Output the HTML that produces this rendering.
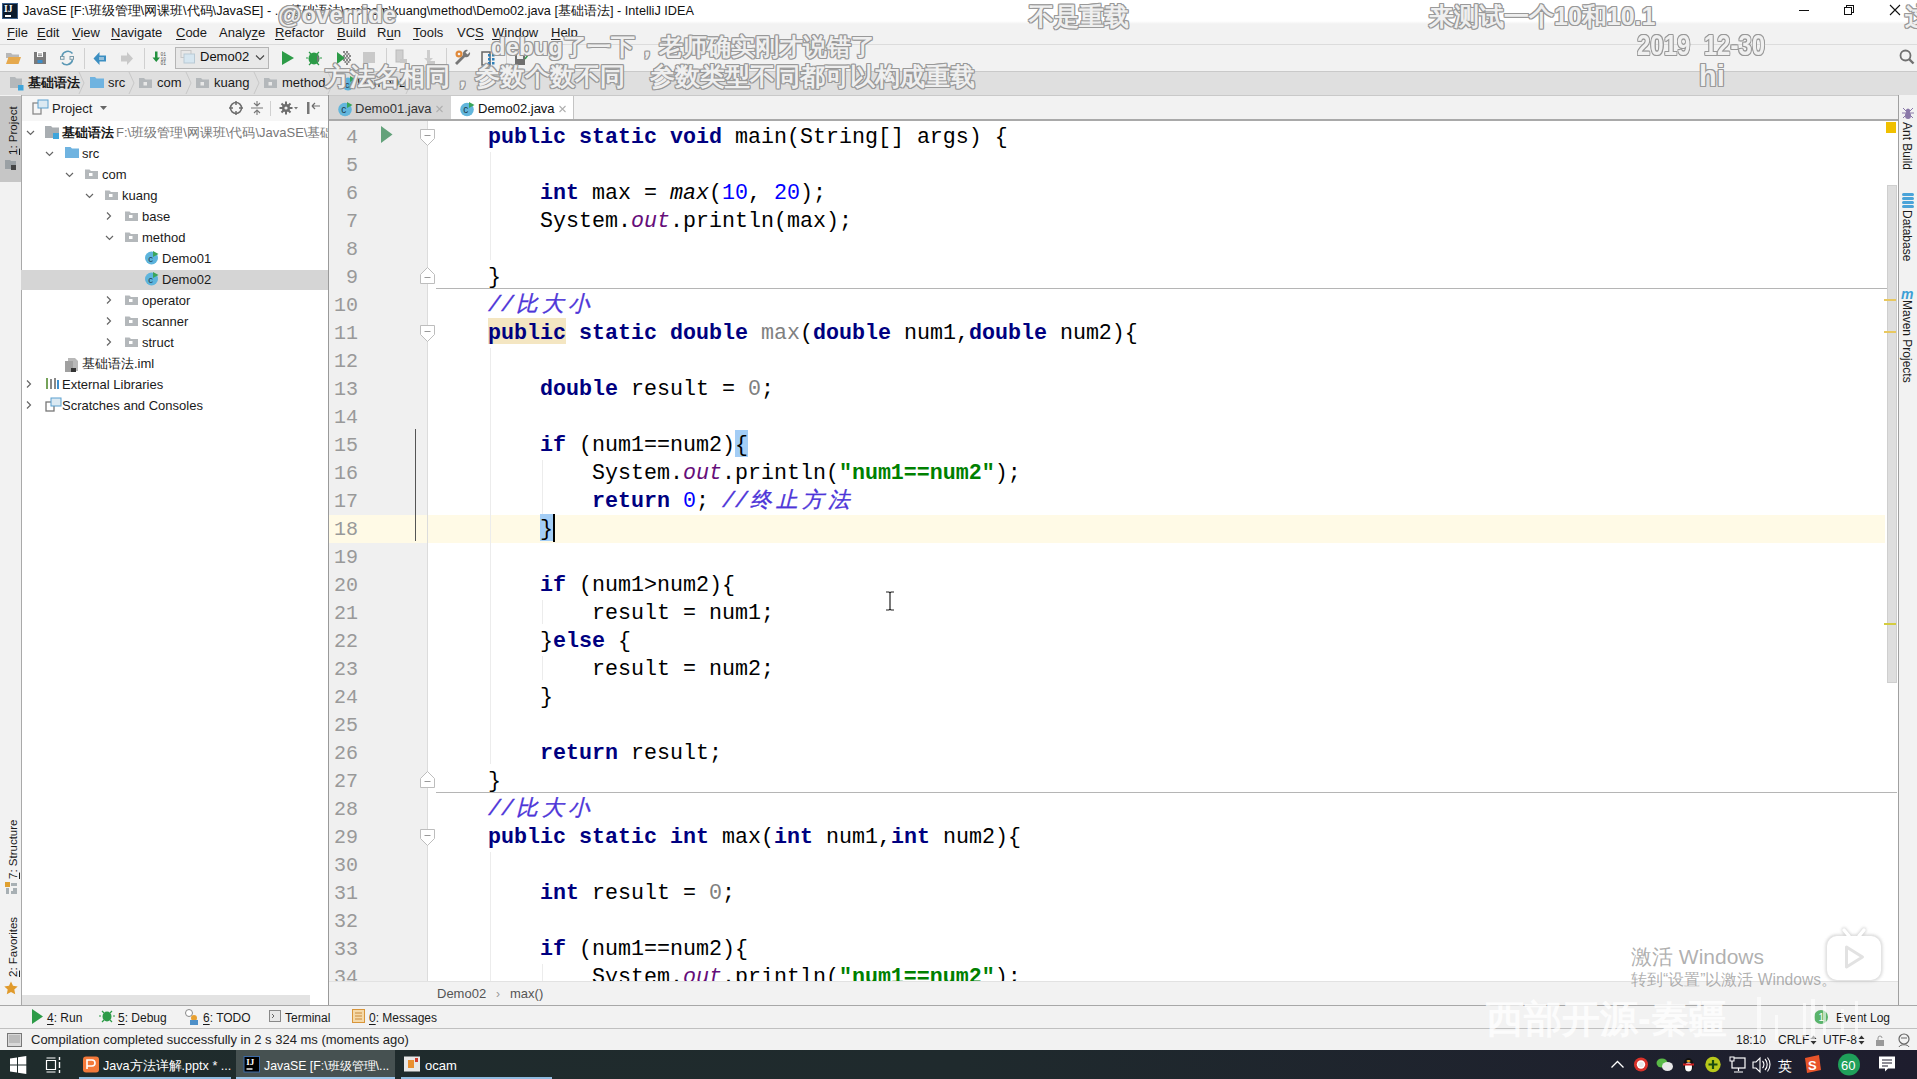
<!DOCTYPE html>
<html><head><meta charset="utf-8">
<style>
*{margin:0;padding:0;box-sizing:border-box}
html,body{width:1917px;height:1079px;overflow:hidden;background:#f2f2f2;font-family:"Liberation Sans",sans-serif;font-size:13px;color:#1a1a1a;position:relative}
.a{position:absolute}
.t{position:absolute;white-space:nowrap;line-height:16px}
u{text-decoration:underline;text-underline-offset:2px}
#title{left:0;top:0;width:1917px;height:24px;background:linear-gradient(#fff 0,#fff 21px,#f2f2f2 24px)}
#menu{left:0;top:24px;width:1917px;height:20px;background:#f2f2f2}
#tool{left:0;top:44px;width:1917px;height:27px;background:#f2f2f2;border-top:1px solid #dcdcdc}
#nav{left:0;top:71px;width:1917px;height:24px;background:#dfdfdf;border-top:1px solid #c9c9c9}
#lstripe{left:0;top:95px;width:22px;height:910px;background:#f2f2f2;border-right:1px solid #a9a9a9}
#proj{left:22px;top:95px;width:307px;height:910px;background:#fff}
#projhdr{left:22px;top:95px;width:306px;height:26px;background:#f6f6f6;border-top:1px solid #c9c9c9}
#vdiv{left:328px;top:95px;width:1px;height:910px;background:#9a9a9a}
#tabs{left:329px;top:95px;width:1569px;height:26px;background:#f2f2f2;border-top:1px solid #c9c9c9}
#gutter{left:329px;top:121px;width:99px;height:860px;background:#f0f0f0;border-right:1px solid #e4e4e4}
#code{left:428px;top:121px;width:1470px;height:860px;background:#fff}
#crumb{z-index:5;left:329px;top:981px;width:1569px;height:24px;background:#f2f2f2;border-top:1px solid #e2e2e2}
#rstripe{left:1898px;top:95px;width:19px;height:910px;background:#f2f2f2;border-left:1px solid #a0a0a0}
#btool{z-index:5;left:0;top:1005px;width:1917px;height:23px;background:#f2f2f2;border-top:1px solid #a8a8a8}
#status{z-index:5;left:0;top:1028px;width:1917px;height:22px;background:#f2f2f2;border-top:1px solid #c0c0c0}
#taskbar{left:0;top:1050px;width:1917px;height:29px;background:#1d2730}
.ln{position:absolute;left:329px;width:29px;text-align:right;color:#999;font-family:"Liberation Mono",monospace;font-size:20px;line-height:28px}
.cl{position:absolute;left:436px;white-space:pre;color:#000;font-family:"Liberation Mono",monospace;font-size:21.67px;line-height:28px}
.k{color:#000080;font-weight:bold}
.n{color:#0000ff}
.s{color:#008000;font-weight:bold}
.f{color:#660e7a;font-style:italic}
.c{color:#4d35d8;font-style:italic;-webkit-text-stroke:.35px #4d35d8}
.g{color:#808080}
.i{font-style:italic}
.w{display:inline-block;width:26px;text-align:center}
.hl{}
.bm{}
.tr{position:absolute;white-space:nowrap;font-size:13px;line-height:21px;color:#1a1a1a}
.sep{position:absolute;width:1px;background:#cfcfcf}
.dm{position:absolute;white-space:nowrap;font-weight:bold;font-size:24px;line-height:26px;color:rgba(255,255,255,.85);
 text-shadow:1px 1px 0 #999,-1px -1px 0 #999,1px -1px 0 #999,-1px 1px 0 #999,0 1px 0 #999,0 -1px 0 #999,1px 0 0 #999,-1px 0 0 #999}
.vt{position:absolute;white-space:nowrap;font-size:12px;line-height:14px;transform-origin:0 0}
</style></head><body>
<div id="title" class="a"></div>
<div id="menu" class="a"></div>
<div id="tool" class="a"></div>
<div id="nav" class="a"></div>
<div id="lstripe" class="a"></div>
<div id="proj" class="a"></div>
<div id="projhdr" class="a"></div>
<div id="tabs" class="a"></div>
<div id="gutter" class="a"></div>
<div id="code" class="a"></div>
<div id="vdiv" class="a"></div>
<div id="crumb" class="a"></div>
<div id="rstripe" class="a"></div>
<div id="btool" class="a"></div>
<div id="status" class="a"></div>
<div id="taskbar" class="a"></div>
<div class="a" style="left:2px;top:3px;width:16px;height:16px;background:#0b1a2b;border:1px solid #3b5f8a"></div>
<div class="t" style="left:4px;top:4px;font-size:9.5px;line-height:10px;color:#fff;font-weight:bold;font-family:'Liberation Serif'">IJ</div>
<div class="a" style="left:5px;top:15px;width:6px;height:1.5px;background:#fff"></div>
<div class="t" style="left:23px;top:3px;font-size:12.7px;color:#111">JavaSE [F:\班级管理\网课班\代码\JavaSE] - ...\基础语法\src\com\kuang\method\Demo02.java [基础语法] - IntelliJ IDEA</div>
<div class="a" style="left:1799px;top:10px;width:10px;height:1px;background:#111"></div>
<div class="a" style="left:1846px;top:5px;width:8px;height:8px;border:1px solid #111;background:#fff"></div>
<div class="a" style="left:1844px;top:7px;width:8px;height:8px;border:1px solid #111;background:#fff"></div>
<svg class="a" style="left:1889px;top:4px" width="12" height="12"><path d="M1 1L11 11M11 1L1 11" stroke="#111" stroke-width="1.1"/></svg>

<div class="t" style="left:7px;top:25px"><u>F</u>ile</div>
<div class="t" style="left:37px;top:25px"><u>E</u>dit</div>
<div class="t" style="left:72px;top:25px"><u>V</u>iew</div>
<div class="t" style="left:111px;top:25px"><u>N</u>avigate</div>
<div class="t" style="left:176px;top:25px"><u>C</u>ode</div>
<div class="t" style="left:219px;top:25px">Analy<u>z</u>e</div>
<div class="t" style="left:275px;top:25px"><u>R</u>efactor</div>
<div class="t" style="left:337px;top:25px"><u>B</u>uild</div>
<div class="t" style="left:377px;top:25px">R<u>u</u>n</div>
<div class="t" style="left:413px;top:25px"><u>T</u>ools</div>
<div class="t" style="left:457px;top:25px">VC<u>S</u></div>
<div class="t" style="left:492px;top:25px"><u>W</u>indow</div>
<div class="t" style="left:551px;top:25px"><u>H</u>elp</div>

<svg class="a" style="left:0;top:44px" width="560" height="27">
 <!-- open folder -->
 <path d="M6 9h5l1.5 1.5H19V14H6z" fill="#b8b8b8"/>
 <path d="M6 20l2.5-7H21l-2.5 7z" fill="#e6a94d"/>
 <!-- save -->
 <rect x="34" y="8" width="12" height="12" fill="#7a7a7a"/>
 <rect x="37" y="8" width="6" height="5" fill="#fff"/>
 <rect x="38" y="9.5" width="4" height="1" fill="#7a7a7a"/><rect x="38" y="11.2" width="4" height="1" fill="#7a7a7a"/>
 <rect x="37.5" y="16" width="5" height="3" fill="#3d8ec9"/>
 <!-- sync -->
 <path d="M62 12a6 6 0 0 1 10.5-2.5M72.5 16a6 6 0 0 1-10.5 2.5" stroke="#5a98b5" stroke-width="1.6" fill="none"/>
 <rect x="60.5" y="12.5" width="3.5" height="2.8" fill="none" stroke="#7a9aa8" stroke-width="1"/>
 <rect x="70" y="12.5" width="3.5" height="2.8" fill="none" stroke="#7a9aa8" stroke-width="1"/>
 <rect x="84" y="4" width="1" height="21" fill="#d0d0d0"/>
 <!-- back -->
 <path d="M93.5 14.5l6-6.5v3.5h6.5v6h-6.5v3.5z" fill="#3c8fc2"/>
 <path d="M99 13h5v3h-5z" fill="#f2f2f2" opacity=".5"/>
 <!-- fwd -->
 <path d="M133 14.5l-6-6.5v3.5h-6v6h6v3.5z" fill="#c9c9c9"/>
 <rect x="144" y="4" width="1" height="21" fill="#d0d0d0"/>
 <!-- 01 -->
 <path d="M155 7.5h2.5v6h2.5l-3.75 4.5-3.75-4.5h2.5z" fill="#22913f"/>
 <text x="160.5" y="12" font-size="4.6" font-family="Liberation Mono" fill="#555">01</text>
 <text x="160.5" y="16.5" font-size="4.6" font-family="Liberation Mono" fill="#555">10</text>
 <text x="160.5" y="21" font-size="4.6" font-family="Liberation Mono" fill="#555">01</text>
 <!-- combobox -->
 <rect x="175.5" y="3.5" width="93" height="21" fill="#e8e8e8" stroke="#b5b5b5"/>
 <rect x="181" y="6.5" width="10" height="7" fill="none" stroke="#c7c7c7" stroke-width="1"/>
 <rect x="184" y="10" width="10.5" height="9" fill="#d6e6f0" stroke="#b9c9d4" stroke-width="1"/>
 <path d="M256 11.5l4 4 4-4" stroke="#444" stroke-width="1.1" fill="none"/>
 <!-- run -->
 <path d="M282 7l12 7-12 7z" fill="#2c9b47"/>
 <!-- debug -->
 <ellipse cx="314" cy="14.5" rx="5.5" ry="6" fill="#2c9b47"/>
 <path d="M309 8l2 2M319 8l-2 2M308 14h-2M320 14h2M309 21l2-2M319 21l-2-2" stroke="#2c9b47" stroke-width="1.2"/>
 <path d="M317 11a4 4 0 0 1 0 7z" fill="#777"/>
 <!-- coverage -->
 <path d="M337 8l8 6-8 6z" fill="#2c9b47"/>
 <g fill="#888"><rect x="343" y="7" width="2" height="2"/><rect x="346" y="7" width="2" height="2"/><rect x="344.5" y="9" width="2" height="2"/><rect x="347.5" y="9" width="2" height="2"/><rect x="343" y="11" width="2" height="2"/><rect x="346" y="11" width="2" height="2"/><rect x="349" y="11" width="2" height="2"/><rect x="344.5" y="13" width="2" height="2"/><rect x="347.5" y="13" width="2" height="2"/><rect x="343" y="15" width="2" height="2"/><rect x="346" y="15" width="2" height="2"/><rect x="349" y="15" width="2" height="2"/><rect x="344.5" y="17" width="2" height="2"/><rect x="347.5" y="17" width="2" height="2"/><rect x="346" y="19" width="2" height="2"/></g>
 <!-- stop -->
 <rect x="363" y="8" width="12" height="11" fill="#c9c9c9"/>
 <rect x="386" y="4" width="1" height="21" fill="#d0d0d0"/>
 <rect x="396" y="6" width="7" height="12" fill="#cfcfcf" stroke="#bbb" stroke-width="1"/>
 <rect x="400" y="15" width="7" height="4" fill="#c8c8c8"/>
 <path d="M427 6h3v8h3l-4.5 4.5-4.5-4.5h3z" fill="#cdcdcd"/>
 <rect x="427" y="17" width="8" height="4" fill="#c8c8c8"/>
 <rect x="446" y="4" width="1" height="21" fill="#d0d0d0"/>
 <!-- wrench -->
 <path d="M457 21l8-8a4 4 0 0 0 5-5l-2.5 2.5-2-2 2.5-2.5a4 4 0 0 0-5 5l-8 8z" fill="#777"/>
 <circle cx="459" cy="10" r="3.5" fill="#e0893a"/><circle cx="459" cy="10" r="1.3" fill="#f2f2f2"/>
 <!-- project structure -->
 <rect x="482" y="8" width="8" height="13" fill="none" stroke="#666" stroke-width="1.5"/>
 <g fill="#2e7fb8"><rect x="488" y="10" width="2.5" height="2.5"/><rect x="492" y="10" width="2.5" height="2.5"/><rect x="488" y="14" width="2.5" height="2.5"/><rect x="492" y="14" width="2.5" height="2.5"/><rect x="488" y="18" width="2.5" height="2.5"/><rect x="492" y="18" width="2.5" height="2.5"/></g>
 <rect x="506" y="4" width="1" height="21" fill="#d0d0d0"/>
 <rect x="515" y="11" width="10" height="10" fill="#6f6f6f"/><rect x="517" y="11" width="6" height="4" fill="#eee"/>
 <path d="M525 7l3 4-3 4" stroke="#3a9a50" stroke-width="1.5" fill="none"/>
</svg>
<svg class="a" style="left:1898px;top:48px" width="18" height="18"><circle cx="7.5" cy="7.5" r="5" fill="none" stroke="#707070" stroke-width="1.8"/><path d="M11 11l4.5 4.5" stroke="#707070" stroke-width="2.4"/></svg>
<div class="t" style="left:200px;top:49px;font-size:13px;color:#111">Demo02</div>

<svg class="a" style="left:0;top:71px" width="460" height="24">
 <defs>
  <g id="gf"><path d="M0 2h5l1.5 1.5H13V12H0z" fill="#b4b8bb"/><rect x="4.5" y="6" width="3.5" height="3.5" fill="#e8e8e8"/></g>
 </defs>
 <path d="M10 6h5l1.5 1.5H22V17H10z" fill="#b4b8bb"/><rect x="18" y="14" width="5.5" height="5.5" fill="#3fa5db"/>
 <path d="M79 1l5 11-5 11" stroke="#c8c8c8" fill="none" stroke-width="1"/>
 <path d="M90 6h5l1.5 1.5H104V17H90z" fill="#6fb3e0"/>
 <path d="M129 1l5 11-5 11" stroke="#c8c8c8" fill="none"/>
 <use href="#gf" x="139" y="5"/>
 <path d="M186 1l5 11-5 11" stroke="#c8c8c8" fill="none"/>
 <use href="#gf" x="196" y="5"/>
 <path d="M254 1l5 11-5 11" stroke="#c8c8c8" fill="none"/>
 <use href="#gf" x="264" y="5"/>
 <path d="M328 1l5 11-5 11" stroke="#c8c8c8" fill="none"/>
 <circle cx="348" cy="13" r="6.5" fill="#5eb3d9"/><text x="345" y="16.5" font-size="9" font-family="Liberation Sans" fill="#234">c</text><path d="M350 5l5 3-5 3z" fill="#3aa55a"/>
 <path d="M406 1l5 11-5 11" stroke="#c8c8c8" fill="none"/>
</svg>
<div class="t" style="left:28px;top:75px;font-weight:bold;font-size:13px">基础语法</div>
<div class="t" style="left:108px;top:75px">src</div>
<div class="t" style="left:157px;top:75px">com</div>
<div class="t" style="left:214px;top:75px">kuang</div>
<div class="t" style="left:282px;top:75px">method</div>
<div class="t" style="left:357px;top:75px">Demo02</div>

<div class="a" style="left:0;top:96px;width:21px;height:86px;background:#c6c6c6"></div>
<div class="vt" style="font-size:11.5px;left:6px;top:155px;transform:rotate(-90deg)"><u>1</u>: Project</div>
<svg class="a" style="left:4px;top:158px" width="14" height="14"><path d="M1 2h5l1 1h5v8H1z" fill="#9aa0a4"/><rect x="7" y="7" width="5" height="5" fill="#444"/></svg>
<div class="vt" style="font-size:11.5px;left:6px;top:879px;transform:rotate(-90deg)"><u>7</u>: Structure</div>
<svg class="a" style="left:5px;top:882px" width="13" height="13"><rect x="0" y="0" width="5" height="5" fill="#e0a030"/><path d="M1 6h3v6H1zM6 1h6v3H6zM8 6h4v6H6v-3h2z" fill="#a8b0b4"/></svg>
<div class="vt" style="font-size:11.5px;left:6px;top:977px;transform:rotate(-90deg)"><u>2</u>: Favorites</div>
<svg class="a" style="left:4px;top:981px" width="14" height="14"><path d="M7 0.5l2 4.3 4.7.6-3.4 3.2.9 4.7L7 11l-4.2 2.3.9-4.7L.3 5.4 5 4.8z" fill="#e09a2b"/></svg>

<svg class="a" style="left:21px;top:95px" width="307" height="26">
 <rect x="12" y="8" width="8" height="11" fill="none" stroke="#8a8a8a" stroke-width="1.3"/><rect x="17" y="5" width="10" height="8" fill="#dbe9f2" stroke="#5aa0cf" stroke-width="1"/>
 <path d="M79 11h7l-3.5 4z" fill="#666"/>
 <circle cx="215" cy="13" r="5.5" fill="none" stroke="#6d6d6d" stroke-width="1.5"/><path d="M215 6v4M215 16v4M208 13h4M218 13h4" stroke="#6d6d6d" stroke-width="1.5"/>
 <path d="M230 13h12M236 6v4M236 16v4M233 8l3 3 3-3M233 18l3-3 3 3" stroke="#777" stroke-width="1.1" fill="none"/>
 <rect x="249" y="6" width="1" height="15" fill="#d0d0d0"/>
 <circle cx="265" cy="13" r="4" fill="#6d6d6d"/><path d="M265 6.5v13M258.5 13h13M260.5 8.5l9 9M269.5 8.5l-9 9" stroke="#6d6d6d" stroke-width="2"/><circle cx="265" cy="13" r="1.6" fill="#f2f2f2"/>
 <path d="M273 12h4l-2 2.5z" fill="#777"/>
 <rect x="286" y="7" width="2.5" height="12" fill="#777"/><path d="M291 11h8M291 11l3-3M291 11l3 3" stroke="#6d6d6d" stroke-width="1.2" fill="none"/>
</svg>
<div class="t" style="left:52px;top:101px;font-size:13px;color:#222">Project</div>
<svg class="a" style="left:21px;top:121px" width="307" height="300">
 <defs>
  <path id="cd" d="M0 0l3.5 3.5L7 0" stroke="#666" stroke-width="1.2" fill="none"/>
  <path id="cr" d="M0 0l3.5 3.5L0 7" stroke="#666" stroke-width="1.2" fill="none"/>
  <g id="pf"><path d="M0 1.5h4.5l1.5 1.5H13V11H0z" fill="#b4b8bb"/><rect x="4" y="5" width="3.5" height="3" fill="#fff"/></g>
  <g id="jc"><circle cx="6.5" cy="7" r="6.5" fill="#5db4dc"/><text x="3.3" y="10.5" font-size="9.5" font-family="Liberation Sans" fill="#1d3a4a">c</text><path d="M8 0l5.5 3-5.5 3z" fill="#3aa55a"/></g>
 </defs>
 <use href="#cd" x="6" y="10"/>
 <path d="M24 5h6l1.5 1.5H38V17H24z" fill="#a9aeb2"/><rect x="32" y="12" width="6" height="6" fill="#3fa5db"/>
 <use href="#cd" x="25" y="31"/>
 <path d="M44 26h5.5l1.5 1.5H58V37H44z" fill="#6fb3e0"/>
 <use href="#cd" x="45" y="52"/>
 <use href="#pf" x="64" y="47"/>
 <use href="#cd" x="65" y="73"/>
 <use href="#pf" x="84" y="68"/>
 <use href="#cr" x="86" y="91.5"/>
 <use href="#pf" x="104" y="89"/>
 <use href="#cd" x="85" y="115"/>
 <use href="#pf" x="104" y="110"/>
 <use href="#jc" x="124" y="130"/>
</svg>
<div class="a" style="left:21px;top:270px;width:307px;height:20px;background:#d5d5d5"></div>
<svg class="a" style="left:21px;top:121px" width="307" height="300">
 <use href="#jc" x="124" y="151"/>
 <use href="#cr" x="86" y="175.5"/>
 <use href="#pf" x="104" y="173"/>
 <use href="#cr" x="86" y="196.5"/>
 <use href="#pf" x="104" y="194"/>
 <use href="#cr" x="86" y="217.5"/>
 <use href="#pf" x="104" y="215"/>
 <path d="M47 237h7l3 3v10H47z" fill="#b8b8b8"/><path d="M44 240h8l0 11H44z" fill="#a0a0a0"/><rect x="50" y="247" width="5" height="4" fill="#333"/>
 <use href="#cr" x="6" y="259.5"/>
 <g fill="#76a35a"><rect x="25" y="257" width="2" height="11"/></g><g fill="#888"><rect x="29" y="258" width="2" height="10"/><rect x="33" y="257" width="2" height="11"/></g><g fill="#3e8fcf"><rect x="36" y="259" width="2" height="9"/></g>
 <use href="#cr" x="6" y="280.5"/>
 <rect x="25" y="281" width="8" height="9" fill="none" stroke="#777" stroke-width="1.3"/><rect x="30" y="277" width="10" height="8" fill="#dbe9f2" stroke="#5aa0cf" stroke-width="1"/>
</svg>
<div class="tr" style="left:62px;top:122px;font-weight:bold">基础语法</div>
<div class="tr" style="left:116px;top:122px;color:#777;width:212px;overflow:hidden">F:\班级管理\网课班\代码\JavaSE\基础语法</div>
<div class="tr" style="left:82px;top:143px">src</div>
<div class="tr" style="left:102px;top:164px">com</div>
<div class="tr" style="left:122px;top:185px">kuang</div>
<div class="tr" style="left:142px;top:206px">base</div>
<div class="tr" style="left:142px;top:227px">method</div>
<div class="tr" style="left:162px;top:248px">Demo01</div>
<div class="tr" style="left:162px;top:269px">Demo02</div>
<div class="tr" style="left:142px;top:290px">operator</div>
<div class="tr" style="left:142px;top:311px">scanner</div>
<div class="tr" style="left:142px;top:332px">struct</div>
<div class="tr" style="left:82px;top:353px">基础语法.iml</div>
<div class="tr" style="left:62px;top:374px">External Libraries</div>
<div class="tr" style="left:62px;top:395px">Scratches and Consoles</div>
<div class="a" style="left:22px;top:995px;width:288px;height:10px;background:#e3e3e3"></div>

<div class="a" style="left:329px;top:96px;width:122px;height:24px;background:#d5d5d5"></div>
<div class="a" style="left:451px;top:96px;width:123px;height:24px;background:#fff;border-right:1px solid #c4c4c4"></div>
<div class="a" style="left:329px;top:119px;width:1569px;height:2px;background:#a9a9a9"></div>
<div class="a" style="left:451px;top:119px;width:123px;height:2px;background:#a9a9a9"></div>
<svg class="a" style="left:329px;top:96px" width="250" height="24">
 <g id="jc2"><circle cx="16" cy="13.5" r="6.8" fill="#62b6dc"/><text x="12.2" y="17" font-size="10" font-family="Liberation Sans" fill="#1d3a4a">c</text><path d="M18 6l5.5 3-5.5 3z" fill="#3aa55a"/></g>
 <path d="M107.5 10l6 6M113.5 10l-6 6" stroke="#b0b0b0" stroke-width="1.1"/>
 <use href="#jc2" x="122"/>
 <path d="M230.5 10l6 6M236.5 10l-6 6" stroke="#b0b0b0" stroke-width="1.1"/>
</svg>
<div class="t" style="left:355px;top:101px;color:#333">Demo01.java</div>
<div class="t" style="left:478px;top:101px;color:#111">Demo02.java</div>

<div class="a" style="left:329px;top:515px;width:1556px;height:28px;background:#fffae6"></div>
<div class="a" style="left:427px;top:121px;width:1px;height:860px;background:#dcdcdc"></div>
<div class="a" style="left:415px;top:429px;width:1px;height:112px;background:#555"></div>
<svg class="a" style="left:329px;top:121px" width="110" height="860">
 <path d="M52 5l11.5 8.5L52 22z" fill="#63a27a"/>
 <g id="fs"><path d="M91.5 8.5h14v9l-7 7-7-7z" fill="#fff" stroke="#bdbdbd" stroke-width="1"/><path d="M95.5 14.5h6" stroke="#999" stroke-width="1"/></g>
 <g id="fe"><path d="M91.5 162.5h14v-9l-7-7-7 7z" fill="#fff" stroke="#bdbdbd" stroke-width="1"/><path d="M95.5 156.5h6" stroke="#999" stroke-width="1"/></g>
 <use href="#fs" y="196"/>
 <use href="#fe" y="504"/>
 <use href="#fs" y="700"/>
</svg>
<div class="a" style="left:436px;top:288px;width:1461px;height:1px;background:#b5b5b5"></div>
<div class="a" style="left:436px;top:792px;width:1461px;height:1px;background:#b5b5b5"></div>
<div class="a" style="left:490px;top:152px;width:1px;height:108px;background:#ececec"></div>
<div class="a" style="left:490px;top:348px;width:1px;height:416px;background:#ececec"></div>
<div class="a" style="left:490px;top:852px;width:1px;height:129px;background:#ececec"></div>
<div class="a" style="left:542px;top:460px;width:1px;height:54px;background:#ececec"></div>
<div class="a" style="left:542px;top:600px;width:1px;height:24px;background:#ececec"></div>
<div class="a" style="left:542px;top:656px;width:1px;height:24px;background:#ececec"></div>
<div class="a" style="left:542px;top:964px;width:1px;height:17px;background:#ececec"></div>
<div class="a" style="left:488px;top:318px;width:78px;height:26px;background:#f4e6c2"></div>
<div class="a" style="left:735px;top:430px;width:13px;height:27px;background:#a3cdf5"></div>
<div class="a" style="left:540px;top:514px;width:13px;height:27px;background:#a3cdf5"></div>
<div class="a" style="left:553px;top:514px;width:2px;height:28px;background:#000"></div>
<!-- scrollbar -->
<div class="a" style="left:1887px;top:185px;width:10px;height:498px;background:#dedede;border:1px solid #cfcfcf"></div>
<div class="a" style="left:1886px;top:122px;width:10px;height:11px;background:#f0c000"></div>
<div class="a" style="left:1884px;top:299px;width:12px;height:2px;background:#e8c860"></div>
<div class="a" style="left:1884px;top:331px;width:12px;height:2px;background:#e8c860"></div>
<div class="a" style="left:1884px;top:623px;width:12px;height:2px;background:#d4cc40"></div>
<!-- mouse I-beam -->
<svg class="a" style="left:884px;top:591px" width="12" height="20"><path d="M2 1h3l1 1 1-1h3M6 2v16M2 19h3l1-1 1 1h3" stroke="#222" stroke-width="1.2" fill="none"/></svg>

<div class="ln" style="top:124px">4</div>
<div class="cl" style="top:124px">    <span class="k">public</span> <span class="k">static</span> <span class="k">void</span> main(String[] args) {</div>
<div class="ln" style="top:152px">5</div>
<div class="ln" style="top:180px">6</div>
<div class="cl" style="top:180px">        <span class="k">int</span> max = <span class="i">max</span>(<span class="n">10</span>, <span class="n">20</span>);</div>
<div class="ln" style="top:208px">7</div>
<div class="cl" style="top:208px">        System.<span class="f">out</span>.println(max);</div>
<div class="ln" style="top:236px">8</div>
<div class="ln" style="top:264px">9</div>
<div class="cl" style="top:264px">    }</div>
<div class="ln" style="top:292px">10</div>
<div class="cl" style="top:292px">    <span class="c">//<span class="w">比</span><span class="w">大</span><span class="w">小</span></span></div>
<div class="ln" style="top:320px">11</div>
<div class="cl" style="top:320px">    <span class="k hl">public</span> <span class="k">static</span> <span class="k">double</span> <span class="g">max</span>(<span class="k">double</span> num1,<span class="k">double</span> num2){</div>
<div class="ln" style="top:348px">12</div>
<div class="ln" style="top:376px">13</div>
<div class="cl" style="top:376px">        <span class="k">double</span> result = <span class="g">0</span>;</div>
<div class="ln" style="top:404px">14</div>
<div class="ln" style="top:432px">15</div>
<div class="cl" style="top:432px">        <span class="k">if</span> (num1==num2)<span class="bm">{</span></div>
<div class="ln" style="top:460px">16</div>
<div class="cl" style="top:460px">            System.<span class="f">out</span>.println(<span class="s">"num1==num2"</span>);</div>
<div class="ln" style="top:488px">17</div>
<div class="cl" style="top:488px">            <span class="k">return</span> <span class="n">0</span>; <span class="c">//<span class="w">终</span><span class="w">止</span><span class="w">方</span><span class="w">法</span></span></div>
<div class="ln" style="top:516px">18</div>
<div class="cl" style="top:516px">        <span class="bm">}</span></div>
<div class="ln" style="top:544px">19</div>
<div class="ln" style="top:572px">20</div>
<div class="cl" style="top:572px">        <span class="k">if</span> (num1&gt;num2){</div>
<div class="ln" style="top:600px">21</div>
<div class="cl" style="top:600px">            result = num1;</div>
<div class="ln" style="top:628px">22</div>
<div class="cl" style="top:628px">        }<span class="k">else</span> {</div>
<div class="ln" style="top:656px">23</div>
<div class="cl" style="top:656px">            result = num2;</div>
<div class="ln" style="top:684px">24</div>
<div class="cl" style="top:684px">        }</div>
<div class="ln" style="top:712px">25</div>
<div class="ln" style="top:740px">26</div>
<div class="cl" style="top:740px">        <span class="k">return</span> result;</div>
<div class="ln" style="top:768px">27</div>
<div class="cl" style="top:768px">    }</div>
<div class="ln" style="top:796px">28</div>
<div class="cl" style="top:796px">    <span class="c">//<span class="w">比</span><span class="w">大</span><span class="w">小</span></span></div>
<div class="ln" style="top:824px">29</div>
<div class="cl" style="top:824px">    <span class="k">public</span> <span class="k">static</span> <span class="k">int</span> max(<span class="k">int</span> num1,<span class="k">int</span> num2){</div>
<div class="ln" style="top:852px">30</div>
<div class="ln" style="top:880px">31</div>
<div class="cl" style="top:880px">        <span class="k">int</span> result = <span class="g">0</span>;</div>
<div class="ln" style="top:908px">32</div>
<div class="ln" style="top:936px">33</div>
<div class="cl" style="top:936px">        <span class="k">if</span> (num1==num2){</div>
<div class="ln" style="top:964px">34</div>
<div class="cl" style="top:964px">            System.<span class="f">out</span>.println(<span class="s">"num1==num2"</span>);</div>
<svg class="a" style="left:1900px;top:105px" width="16" height="290">
 <g stroke="#8a78a8" stroke-width="1"><path d="M3 3l3 3M13 3l-3 3M2 8h12M3 13l3-3M13 13l-3-3"/></g><ellipse cx="8" cy="6" rx="2.2" ry="2.5" fill="#8a78a8"/><ellipse cx="8" cy="10.5" rx="3" ry="3.5" fill="#8a78a8"/>
 <g fill="#4aa3d8"><rect x="2" y="88" width="12" height="3" rx="1.5"/><rect x="2" y="92" width="12" height="3" rx="1.5"/><rect x="2" y="96" width="12" height="3" rx="1.5"/><rect x="2" y="100" width="12" height="3" rx="1.5"/></g>
 <text x="1" y="194" font-size="14" font-style="italic" font-weight="bold" font-family="Liberation Sans" fill="#3d9fd6">m</text>
</svg>
<div class="vt" style="left:1914px;top:122px;transform:rotate(90deg)">Ant Build</div>
<div class="vt" style="left:1914px;top:210px;transform:rotate(90deg)">Database</div>
<div class="vt" style="left:1914px;top:300px;transform:rotate(90deg)">Maven Projects</div>

<div class="t" style="z-index:6;left:437px;top:986px;color:#555">Demo02</div>
<div class="t" style="z-index:6;left:496px;top:986px;color:#999;font-size:12px">›</div>
<div class="t" style="z-index:6;left:510px;top:986px;color:#555">max()</div>
<svg class="a" style="z-index:6;left:0;top:1005px" width="460" height="23">
 <path d="M32 4l11 7.5L32 19z" fill="#2c9b47"/>
 <ellipse cx="107" cy="11.5" rx="4.5" ry="5" fill="#2c9b47"/><path d="M102 6l2 2M112 6l-2 2M101 11h-2M113 11h2M102 17l2-2M112 17l-2-2" stroke="#2c9b47" stroke-width="1.2"/>
 <circle cx="189" cy="8" r="3.5" fill="#fff" stroke="#888" stroke-width="1"/><circle cx="194" cy="13" r="3" fill="#e8a030"/><rect x="190" y="15" width="8" height="5" fill="#4d8fc8"/>
 <rect x="269.5" y="5.5" width="11" height="11" fill="#e8e8e8" stroke="#888"/><path d="M272 9l2 2-2 2" stroke="#666" fill="none"/>
 <rect x="352.5" y="4.5" width="12" height="13" fill="#f5d9a8" stroke="#d8953a"/><path d="M355 8h7M355 11h7M355 14h7" stroke="#c98a3a" stroke-width="1"/>
</svg>
<div class="t" style="z-index:6;left:47px;top:1010px;font-size:12px"><u>4</u>: Run</div>
<div class="t" style="z-index:6;left:118px;top:1010px;font-size:12px"><u>5</u>: Debug</div>
<div class="t" style="z-index:6;left:203px;top:1010px;font-size:12px"><u>6</u>: TODO</div>
<div class="t" style="z-index:6;left:285px;top:1010px;font-size:12px">Terminal</div>
<div class="t" style="z-index:6;left:369px;top:1010px;font-size:12px"><u>0</u>: Messages</div>
<svg class="a" style="z-index:6;left:1812px;top:1008px" width="18" height="18"><circle cx="9" cy="9" r="7" fill="#59b36a"/><text x="6.5" y="13" font-size="10" font-family="Liberation Sans" fill="#fff">1</text></svg>
<div class="t" style="z-index:6;left:1836px;top:1010px;font-size:12px">Event Log</div>
<svg class="a" style="z-index:6;left:6px;top:1032px" width="18" height="16"><rect x="1.5" y="1.5" width="14" height="13" fill="#d8d8d8" stroke="#777"/><rect x="3" y="3" width="11" height="8" fill="#bbb"/></svg>
<div class="t" style="z-index:6;left:31px;top:1032px;font-size:13px;color:#222">Compilation completed successfully in 2 s 324 ms (moments ago)</div>
<div class="t" style="z-index:6;left:1736px;top:1032px;font-size:12px">18:10</div>
<div class="t" style="z-index:6;left:1778px;top:1032px;font-size:12px">CRLF<svg width="7" height="10" style="vertical-align:-1px;margin-left:1px"><path d="M0.5 4l3-3.5 3 3.5zM0.5 6l3 3.5 3-3.5z" fill="#333"/></svg></div>
<div class="t" style="z-index:6;left:1823px;top:1032px;font-size:12px">UTF-8<svg width="7" height="10" style="vertical-align:-1px;margin-left:1px"><path d="M0.5 4l3-3.5 3 3.5zM0.5 6l3 3.5 3-3.5z" fill="#333"/></svg></div>
<svg class="a" style="z-index:6;left:1875px;top:1035px" width="12" height="12"><rect x="1" y="5" width="8" height="6" fill="#999"/><path d="M3 5V3a2 2 0 0 1 4 0" stroke="#999" fill="none"/></svg>
<svg class="a" style="z-index:6;left:1896px;top:1032px" width="16" height="16"><circle cx="8" cy="7" r="5" fill="none" stroke="#666" stroke-width="1.2"/><path d="M3 15c1-3 9-3 10 0" stroke="#666" fill="none"/><path d="M5 6h6" stroke="#666"/></svg>

<div class="a" style="left:0;top:1050px;width:1917px;height:29px;background:linear-gradient(90deg,#1f2c2c 0%,#1f2a2d 50%,#1e1d2e 100%);z-index:6"></div>
<div class="a" style="left:236px;top:1050px;width:159px;height:29px;background:#465151;z-index:6"></div>
<div class="a" style="left:79px;top:1077px;width:152px;height:2px;background:#8fbbe0;z-index:6"></div>
<div class="a" style="left:236px;top:1077px;width:159px;height:2px;background:#9cc6ea;z-index:6"></div>
<div class="a" style="left:401px;top:1077px;width:151px;height:2px;background:#8fbbe0;z-index:6"></div>
<svg class="a" style="left:0;top:1050px;z-index:7" width="560" height="29">
 <path d="M10 8.5l7-1v7H10zM18 7.3l8.3-1.2v8.4H18zM10 15.5h7v7l-7-1zM18 15.5h8.3v8.4L18 22.7z" fill="#fff"/>
 <path d="M46.5 8h9M46.5 22h9M46.5 10.5v9h9v-9z" stroke="#fff" stroke-width="1.2" fill="none"/><path d="M59.5 7v3M59.5 12v6M59.5 20v3" stroke="#fff" stroke-width="1.4"/>
 <rect x="83" y="6.5" width="16" height="16" rx="3" fill="#f3793a"/><path d="M87 19V10h5a3 3 0 0 1 0 6h-5" stroke="#fff" stroke-width="1.6" fill="none"/>
 <rect x="244" y="6.5" width="15.5" height="15.5" fill="#000" stroke="#3d6ba8" stroke-width="1"/><text x="246.3" y="15" font-size="9" font-weight="bold" font-family="Liberation Serif" fill="#fff">IJ</text><rect x="246.5" y="18.3" width="6" height="1.4" fill="#fff"/>
 <rect x="404" y="6.5" width="16" height="15" fill="#e8e8e8"/><rect x="408" y="10" width="6" height="8" fill="#e89030"/><rect x="415" y="8" width="3" height="4" fill="#d04030"/>
</svg>
<div class="t" style="left:103px;top:1058px;color:#fff;font-size:12.6px;z-index:7">Java方法详解.pptx * ...</div>
<div class="t" style="left:264px;top:1058px;color:#fff;font-size:12.3px;z-index:7">JavaSE [F:\班级管理\...</div>
<div class="t" style="left:425px;top:1058px;color:#fff;font-size:13px;z-index:7">ocam</div>
<svg class="a" style="left:1600px;top:1050px;z-index:7" width="317" height="29">
 <path d="M11.5 17.5l6-6 6 6" stroke="#fff" stroke-width="1.3" fill="none"/>
 <circle cx="41" cy="14.5" r="7" fill="#d8322a"/><circle cx="41" cy="14.5" r="4.2" fill="#fff"/><circle cx="41" cy="14.5" r="2.8" fill="#e8e8e8"/>
 <ellipse cx="62" cy="13" rx="5.5" ry="4.5" fill="#59b946"/><ellipse cx="67.5" cy="16.5" rx="5.5" ry="4.5" fill="#e8e8e8"/>
 <ellipse cx="88.5" cy="15" rx="5" ry="7" fill="#111"/><ellipse cx="88.5" cy="17" rx="3.5" ry="4.5" fill="#fff"/><rect x="83" y="13.5" width="11" height="2" fill="#d02020"/><ellipse cx="88.5" cy="11" rx="2" ry="1" fill="#f0b020"/>
 <circle cx="113" cy="14.5" r="7.7" fill="#b8c81a"/><path d="M113 10v9M108.5 14.5h9" stroke="#1a4a10" stroke-width="2.2"/>
 <rect x="132" y="8" width="13" height="10" fill="none" stroke="#fff" stroke-width="1.2"/><path d="M138.5 18v3M134 22h9" stroke="#fff" stroke-width="1.2"/><rect x="130" y="7" width="4" height="4" fill="#1e1d2e" stroke="#fff" stroke-width="1"/>
 <path d="M153 12h3l4-4v14l-4-4h-3z" fill="none" stroke="#fff" stroke-width="1.1"/><path d="M162.5 11a5 5 0 0 1 0 7M165 9a8 8 0 0 1 0 11M167.5 7.5a11 11 0 0 1 0 14" stroke="#fff" stroke-width="1.1" fill="none"/>
 <text x="177.5" y="21" font-size="14" font-family="Liberation Sans" fill="#fff">英</text>
 <path d="M205 8l14-3 2 15-14 3z" fill="#e8542a"/><text x="208" y="20" font-size="13" font-weight="bold" font-family="Liberation Sans" fill="#fff">S</text>
 <circle cx="249" cy="14.5" r="11" fill="#1fa05a"/><text x="241" y="19.5" font-size="13" font-family="Liberation Sans" fill="#fff">60</text>
 <path d="M279 6.5h16v12h-7l-3 3v-3h-6z" fill="#fff"/><path d="M282 10h10M282 13h10M282 16h6" stroke="#1e1d2e" stroke-width="1.2"/>
</svg>

<div class="dm" style="z-index:20;left:278px;top:2px">@override</div>
<div class="dm" style="z-index:20;left:1029px;top:3px;font-size:25px">不是重载</div>
<div class="dm" style="z-index:20;left:1429px;top:3px;font-size:25px">来测试一个10和10.1</div>
<div class="dm" style="z-index:20;left:491px;top:34px;font-size:24px">debug了一下，老师确实刚才说错了</div>
<div class="dm" style="z-index:20;left:325px;top:63px;font-size:25px">方法名相同，参数个数不同　参数类型不同都可以构成重载</div>
<div class="dm" style="z-index:20;left:1637px;top:29px;font-size:30px;line-height:32px;transform:scaleX(.8);transform-origin:0 0">2019&nbsp; 12-30</div>
<div class="dm" style="z-index:20;left:1699px;top:60px;font-size:29px;line-height:32px">hi</div>
<div class="dm" style="z-index:20;left:1905px;top:3px;font-size:25px">这</div>
<div class="t" style="z-index:20;left:1631px;top:945px;font-size:21px;line-height:24px;color:rgba(150,150,150,.75)">激活 Windows</div>
<div class="t" style="z-index:20;left:1631px;top:971px;font-size:15.6px;line-height:18px;color:rgba(150,150,150,.75)">转到“设置”以激活 Windows。</div>
<svg class="a" style="z-index:20;left:1820px;top:920px" width="70" height="68">
 <defs><filter id="sh" x="-30%" y="-30%" width="160%" height="160%"><feGaussianBlur stdDeviation="1.5"/></filter></defs>
 <g filter="url(#sh)" opacity=".7"><rect x="7" y="16" width="54" height="44" rx="10" fill="none" stroke="#bbb" stroke-width="2.5"/><path d="M24 10l5 6M44 10l-5 6" stroke="#bbb" stroke-width="4.5" stroke-linecap="round"/></g>
 <path d="M24 10l5 6M44 10l-5 6" stroke="#fff" stroke-width="3.5" stroke-linecap="round"/>
 <rect x="7" y="16" width="54" height="44" rx="10" fill="#fff"/>
 <path d="M26.5 27l16 10-16 10z" fill="none" stroke="#e2e2e2" stroke-width="3" stroke-linejoin="round"/>
</svg>
<div class="t" style="z-index:20;left:1486px;top:998px;font-size:38px;line-height:42px;font-weight:bold;color:rgba(255,255,255,.8)">西部开源-秦疆</div>
<svg class="a" style="z-index:20;left:1745px;top:995px" width="140" height="50"><g fill="rgba(255,255,255,.6)"><rect x="12" y="2" width="4" height="44"/><rect x="30" y="20" width="3" height="26"/><rect x="58" y="8" width="3" height="34"/><rect x="66" y="4" width="4" height="40"/><rect x="78" y="10" width="3" height="30"/><rect x="96" y="14" width="3" height="26"/><rect x="110" y="6" width="3" height="36"/></g></svg>

</body></html>
